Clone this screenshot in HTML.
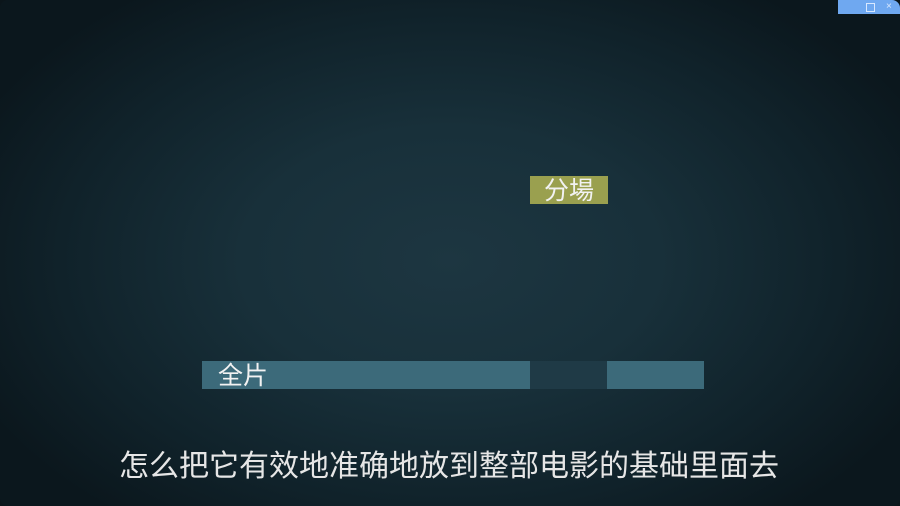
<!DOCTYPE html>
<html><head><meta charset="utf-8"><style>
html,body{margin:0;padding:0;width:900px;height:506px;overflow:hidden;background:#0b151a;}
.f{position:absolute;left:0;top:0;width:900px;height:506px;border-radius:8px;overflow:hidden;
background:radial-gradient(ellipse 520px 330px at 450px 260px,#1d3641 0%,#18303a 40%,#10222a 75%,#0b171d 100%);}
.t{position:absolute;color:#f2f2f2;font-family:"Liberation Sans","Noto Sans CJK SC",sans-serif;white-space:nowrap;}
</style></head><body><div class="f">
<div style="position:absolute;left:530px;top:176px;width:78px;height:28px;background:#9aa04f"></div>
<div class="t" style="left:544px;top:176px;font-size:25px;line-height:30px">分場</div>
<div style="position:absolute;left:202px;top:361px;width:502px;height:28px;background:#3c6a7a"></div>
<div style="position:absolute;left:530px;top:361px;width:77px;height:28px;background:#1f3a46"></div>
<div class="t" style="left:218px;top:361px;font-size:25px;line-height:30px">全片</div>
<div class="t" style="left:119px;top:448px;font-size:30px;line-height:38px;letter-spacing:0;color:#e6e6e6">怎么把它有效地准确地放到整部电影的基础里面去</div>
<div style="position:absolute;left:838px;top:0;width:62px;height:14px;background:#6fa8f0"></div>
<div style="position:absolute;left:866px;top:3px;width:7px;height:7px;border:1px solid #d8e8ff"></div>
<div class="t" style="left:886px;top:0px;font-size:10px;line-height:13px;color:#d8e8ff">×</div>
</div></body></html>
